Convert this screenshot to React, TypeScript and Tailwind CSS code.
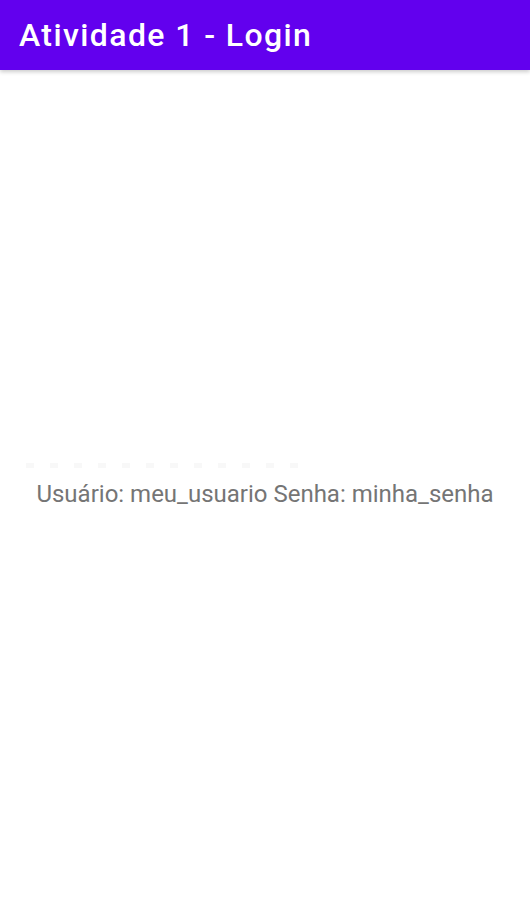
export default function App() {
  const pontos = Array.from({ length: 12 }, (_, i) => i);

  return (
    <div className="w-[530px] h-[915px] bg-white flex flex-col" style={{ fontFamily: "Roboto, 'Noto Sans', sans-serif" }}>
      {/* Barra superior */}
      <header className="h-[70px] bg-[#6200ee] flex items-center px-[19px] shadow-[0_2px_4px_rgba(0,0,0,0.2)] z-10">
        <h1 className="text-[32px] font-medium text-white tracking-[1.4px]">Atividade 1 - Login</h1>
      </header>

      {/* Conteúdo */}
      <main className="flex-1 flex flex-col">
        <div className="h-[391px]" />
        <div className="flex gap-[16px] pl-[26px] h-[8px] items-center">
          {pontos.map((p) => (
            <div key={p} className="w-[8px] h-[5px] bg-[#f8f8f8]" />
          ))}
        </div>
        <p className="mt-[9px] text-center text-[24px] text-[#757575] leading-[32px]">
          Usuário: meu_usuario Senha: minha_senha
        </p>
      </main>
    </div>
  );
}
